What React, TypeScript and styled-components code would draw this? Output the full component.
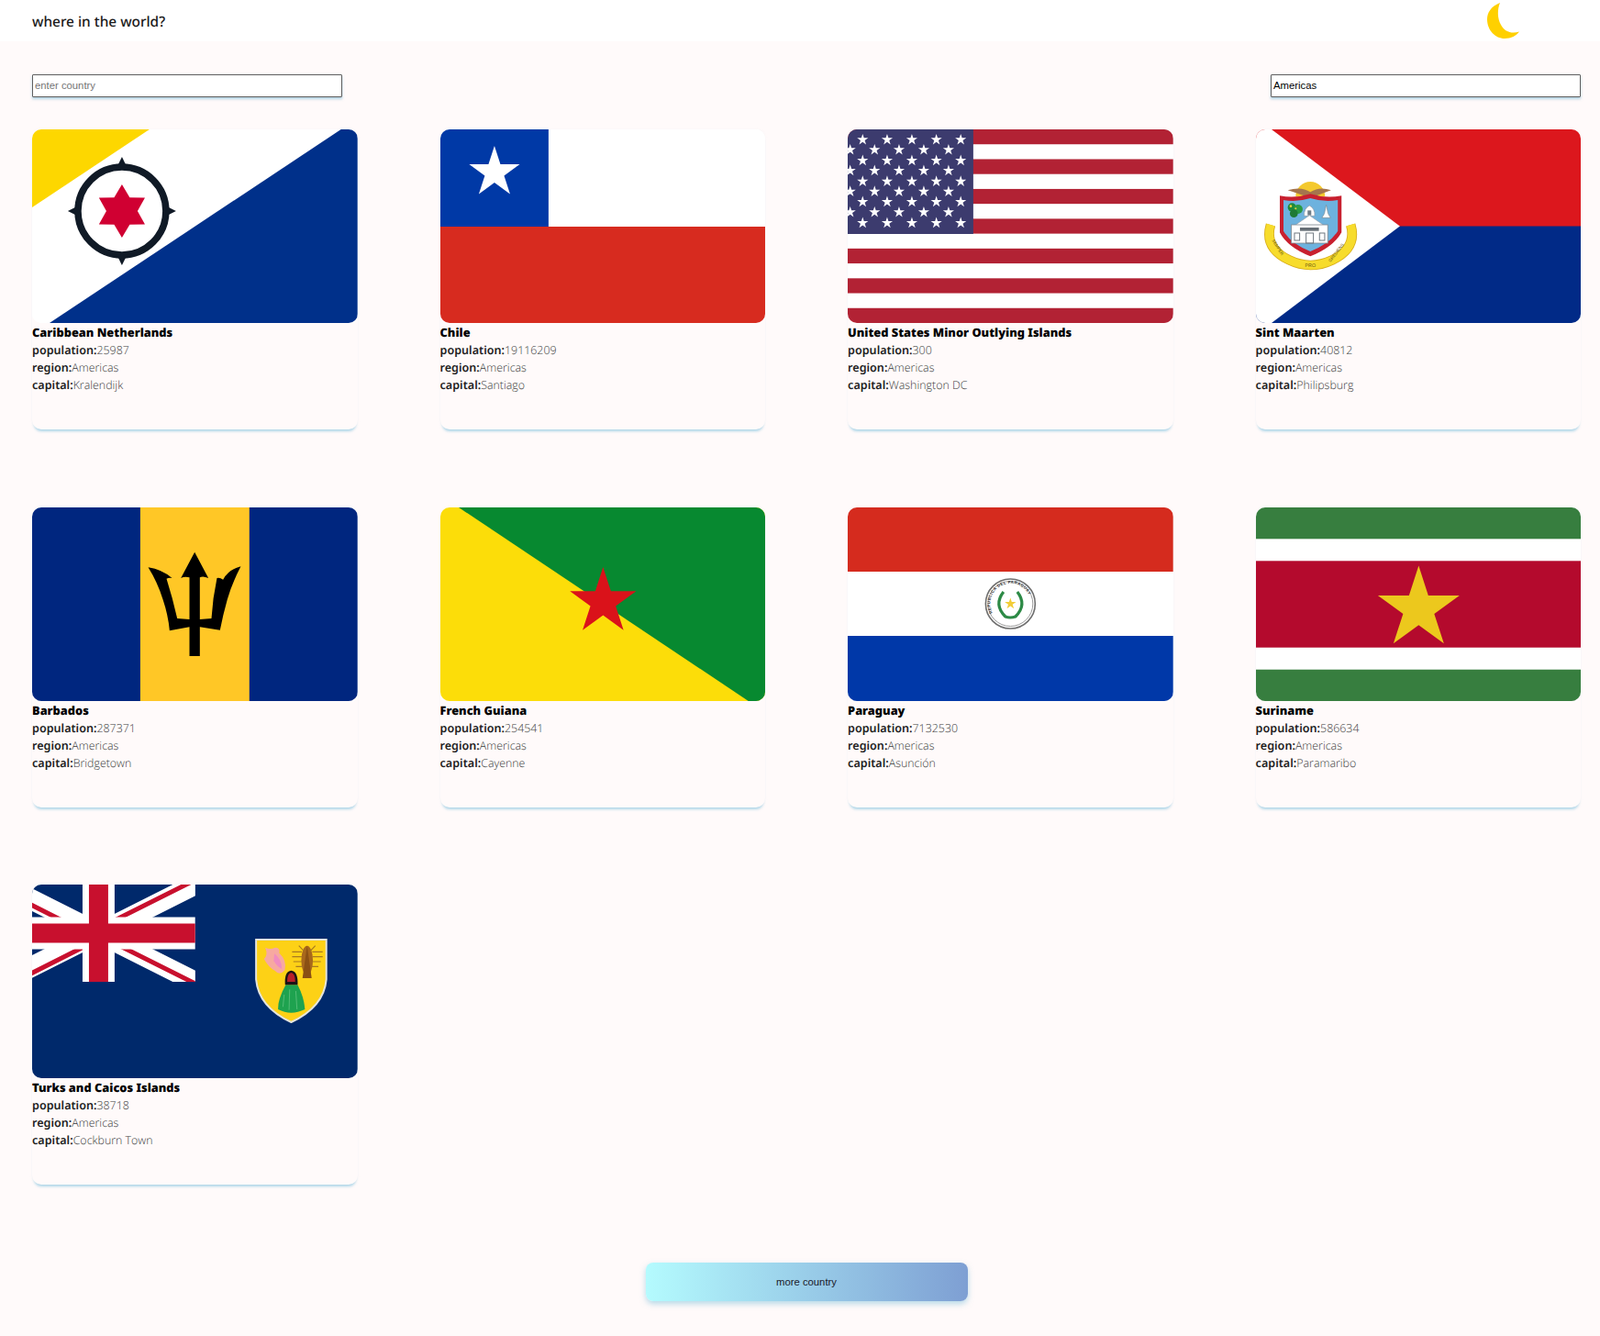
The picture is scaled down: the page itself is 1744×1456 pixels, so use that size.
import React from "react";
import styled, { createGlobalStyle } from "styled-components";

const GlobalStyle = createGlobalStyle`
  html, body { margin: 0; padding: 0; background: #fffafa; }
  body { font-family: "Open Sans", "Noto Sans", sans-serif; color: #111; text-rendering: geometricPrecision; }
  * { box-sizing: border-box; }
`;

const Page = styled.div`
  width: 1744px;
  height: 1456px;
  overflow: hidden;
  background: #fffafa;
`;
const Header = styled.header`
  height: 45px;
  background: #fff;
  display: flex;
  align-items: center;
  justify-content: space-between;
  padding: 0 87px 0 35px;
`;
const Title = styled.h1`
  margin: 3px 0 0;
  font: 500 15.4px/24px "Noto Sans", sans-serif;
  color: #1a1a1a;
`;
const Moon = styled.svg`
  display: block;
  width: 40px;
  height: 45px;
  margin-right: -1px;
`;
const Controls = styled.div`
  display: flex;
  justify-content: space-between;
  padding: 36px 21px 35px 35px;
`;
const Field = styled.input`
  width: 338px;
  height: 25px;
  padding: 0 2px 1px;
  background: #fff;
  border: 1px solid #5f5f5f;
  border-radius: 1px;
  box-shadow: 0 2px 3px rgba(110, 175, 205, 0.55);
  font: 11.3px "Liberation Sans", Arial, sans-serif;
  color: #000;
  outline: none;
  &::placeholder { color: #757575; opacity: 1; }
`;
const Grid = styled.main`
  display: grid;
  grid-template-columns: repeat(4, 354.7px);
  justify-content: space-between;
  row-gap: 84.5px;
  padding: 0 20.7px 0 35px;
`;
const Card = styled.article`
  height: 327px;
  border-radius: 10px;
  background: #fffafa;
  box-shadow: 0 4px 3px -2px rgba(120, 190, 220, 0.6), 0 0 3px rgba(215, 222, 228, 0.16);
`;
const FlagBox = styled.div`
  height: 211px;
  border-radius: 10px;
  overflow: hidden;
  background: #fff;
`;
const FlagSvg = styled.svg`
  display: block;
  width: 100%;
  height: 211px;
`;
const Info = styled.div`
  padding-top: 1px;
`;
const Name = styled.h2`
  margin: 0;
  font: 900 12.8px/19px "Noto Sans", sans-serif;
  color: #000;
`;
const Row = styled.p`
  margin: 0;
  font: 600 12.6px/19px "Noto Sans", sans-serif;
  color: #1f1f1f;
`;
const Value = styled.span`
  font: 300 12.4px/19px "Open Sans", sans-serif;
  color: #3a3a3a;
`;
const Footer = styled.footer`
  display: flex;
  justify-content: center;
  padding: 85px 0 0 14px;
`;
const MoreButton = styled.button`
  width: 351px;
  height: 42px;
  border: none;
  border-radius: 8px;
  background: linear-gradient(90deg, #b4fbfe 0%, #7e9fd3 100%);
  box-shadow: 0 3px 6px rgba(110, 185, 215, 0.5);
  font: 11.3px "Liberation Sans", Arial, sans-serif;
  color: #1a1a2a;
`;

const star = (cx: number, cy: number, R: number, r = R * 0.382, n = 5) => {
  const pts: string[] = [];
  for (let i = 0; i < n * 2; i++) {
    const a = -Math.PI / 2 + (i * Math.PI) / n;
    const rad = i % 2 ? r : R;
    pts.push(`${(cx + rad * Math.cos(a)).toFixed(2)},${(cy + rad * Math.sin(a)).toFixed(2)}`);
  }
  return pts.join(" ");
};

const Flag: React.FC<{ children: React.ReactNode }> = ({ children }) => (
  <FlagBox>
    <FlagSvg viewBox="0 0 355 211" preserveAspectRatio="none" aria-hidden="true">{children}</FlagSvg>
  </FlagBox>
);

const Bonaire = () => (
  <Flag>
    <rect width="355" height="211" fill="#fff" />
    <polygon points="0,0 128,0 0,85" fill="#fdd700" />
    <polygon points="337,0 355,0 355,211 19,211" fill="#00308a" />
    <circle cx="98" cy="89" r="48" fill="none" stroke="#101a26" strokeWidth="7.5" />
    <polygon points="98,30 105,44 91,44" fill="#101a26" />
    <polygon points="98,148 105,134 91,134" fill="#101a26" />
    <polygon points="39,89 53,82 53,96" fill="#101a26" />
    <polygon points="157,89 143,82 143,96" fill="#101a26" />
    <polygon points={star(98, 89, 29, 17, 6)} fill="#d00032" />
  </Flag>
);

const Chile = () => (
  <Flag>
    <rect width="355" height="106" fill="#fff" />
    <rect y="106" width="355" height="105" fill="#d72b1f" />
    <rect width="118" height="106" fill="#0039a6" />
    <polygon points={star(59, 47, 29)} fill="#fff" />
  </Flag>
);

const usaRows = [11.3, 22.3, 34, 45, 56.7, 67.7, 79, 90.3, 102];
const usaOdd = [16.3, 43, 70, 96.7, 123.3];
const usaEven = [2.7, 29.3, 56, 83, 110];
const USA = () => (
  <Flag>
    <rect width="355" height="211" fill="#fff" />
    {[0, 2, 4, 6, 8, 10, 12].map((i) => (
      <rect key={i} y={(i * 211) / 13} width="355" height={211 / 13} fill="#b22234" />
    ))}
    <rect width="137" height="114" fill="#3c3b6e" />
    {usaRows.map((y, r) =>
      (r % 2 ? usaEven : usaOdd).map((x) => <polygon key={`${r}-${x}`} points={star(x, y, 6.4)} fill="#fff" />)
    )}
  </Flag>
);

const SintMaarten = () => (
  <Flag>
    <rect width="355" height="106" fill="#dc171d" />
    <rect y="105.5" width="355" height="106" fill="#012a87" />
    <polygon points="0,0 17,0 157,105.5 17,211 0,211" fill="#fff" />
    <g transform="translate(6,49) scale(0.3333)">
      <path d="M112 72 A48 48 0 0 1 208 72Z" fill="#f4c92e" />
      <path d="M86 52 Q130 38 160 58 Q190 38 228 52 Q190 66 168 74 L152 74 Q130 66 86 52Z" fill="#a5754d" />
      <path d="M30 165 Q8 240 90 280 Q160 314 232 280 Q314 240 292 165" fill="none" stroke="#d8ae1c" strokeWidth="32" />
      <path d="M30 165 Q8 240 90 280 Q160 314 232 280 Q314 240 292 165" fill="none" stroke="#f7dc2c" strokeWidth="27" />
      <path d="M60 70 Q110 80 160 64 Q210 80 262 70 L262 190 Q235 238 160 268 Q85 238 60 190Z" fill="#c8202f" />
      <path d="M72 84 Q115 92 160 78 Q205 92 250 84 L250 185 Q225 226 160 252 Q95 226 72 185Z" fill="#6db2de" />
      <circle cx="100" cy="108" r="14" fill="#1f8a3b" />
      <circle cx="120" cy="114" r="15" fill="#2a9a44" />
      <circle cx="106" cy="128" r="13" fill="#1f7a34" />
      <circle cx="96" cy="104" r="4" fill="#ecd13a" />
      <circle cx="112" cy="112" r="3" fill="#ecd13a" />
      <path d="M157 102 Q176 112 174 136 L140 136 Q138 112 157 102Z" fill="#fff" stroke="#8f99a1" strokeWidth="2" />
      <rect x="151" y="118" width="12" height="16" fill="#6f7d87" />
      <path d="M108 168 L157 134 L206 168Z" fill="#fff" stroke="#99a2aa" strokeWidth="2" />
      <rect x="98" y="165" width="119" height="60" fill="#fff" stroke="#7f8991" strokeWidth="2.5" />
      <rect x="126" y="174" width="62" height="11" fill="#666e75" />
      <rect x="108" y="192" width="17" height="24" fill="none" stroke="#6f7880" strokeWidth="3" />
      <rect x="146" y="192" width="24" height="33" fill="none" stroke="#6f7880" strokeWidth="3" />
      <rect x="190" y="192" width="17" height="24" fill="none" stroke="#6f7880" strokeWidth="3" />
      <path d="M212 100 L218 128 L226 142 L198 142 L206 128Z" fill="#fff" stroke="#7f8991" strokeWidth="2" />
      <text x="160" y="304" fontSize="16" textAnchor="middle" fill="#6b5a12" fontFamily="Liberation Sans">PRO</text>
      <text transform="translate(34,216) rotate(58)" fontSize="14" fill="#6b5a12" fontFamily="Liberation Sans">SEMPER</text>
      <text transform="translate(226,288) rotate(-52)" fontSize="14" fill="#6b5a12" fontFamily="Liberation Sans">GREDIENS</text>
    </g>
  </Flag>
);

const Barbados = () => (
  <Flag>
    <rect width="355" height="211" fill="#00267f" />
    <rect x="118" width="119" height="211" fill="#ffc726" />
    <g transform="translate(65,27) scale(0.3333)">
      <path
        d="M337 65 L382 150 Q364 142 354 148 L354 285 L392 282 Q396 215 410 150 Q420 148 430 155 Q448 122 488 112 Q458 170 444 220 Q430 270 420 320 L354 310 L354 405 L320 405 L320 310 L255 322 Q250 270 233 220 Q216 165 185 115 Q230 122 263 150 Q252 148 245 152 Q265 215 280 282 L320 285 L320 148 Q305 143 292 150Z"
        fill="#000"
      />
    </g>
  </Flag>
);

const FrenchGuiana = () => (
  <Flag>
    <rect width="355" height="211" fill="#fcdd09" />
    <polygon points="20,0 355,0 355,211 336,211" fill="#078930" />
    <polygon points={star(177.5, 103, 38)} fill="#da121a" />
  </Flag>
);

const Paraguay = () => (
  <Flag>
    <rect width="355" height="70" fill="#d52b1e" />
    <rect y="70" width="355" height="70" fill="#fff" />
    <rect y="140" width="355" height="71" fill="#0038a8" />
    <circle cx="177.5" cy="105" r="27" fill="#fff" stroke="#6f6f6f" strokeWidth="1.6" />
    <circle cx="177.5" cy="105" r="24.5" fill="none" stroke="#9a9a9a" strokeWidth="1" />
    <defs>
      <path id="py-ring" d="M158 115 A22 22 0 1 1 197 115" />
    </defs>
    <text fontSize="4.4" fontWeight="700" fill="#333" fontFamily="Liberation Sans" letterSpacing="0.4">
      <textPath href="#py-ring">REPUBLICA DEL PARAGUAY</textPath>
    </text>
    <path d="M170 92 Q159 106 172 119 Q177 121 183 119 Q196 106 185 92" fill="none" stroke="#2d8a46" strokeWidth="3.2" />
    <polygon points={star(177.5, 105, 6.5)} fill="#f2cd37" />
  </Flag>
);

const Suriname = () => (
  <Flag>
    <rect width="355" height="211" fill="#377e3f" />
    <rect y="34.3" width="355" height="142.4" fill="#fff" />
    <rect y="58.3" width="355" height="94.4" fill="#b40a2d" />
    <polygon points={star(177.5, 110.4, 46.8)} fill="#ecc81d" />
  </Flag>
);

const Turks = () => (
  <Flag>
    <rect width="355" height="211" fill="#00296b" />
    <defs>
      <clipPath id="tc-jack"><rect width="178" height="106" /></clipPath>
    </defs>
    <g clipPath="url(#tc-jack)">
      <g transform="translate(-33,0)">
        <path d="M0 0 L211 106 M211 0 L0 106" stroke="#fff" strokeWidth="22" />
        <path
          d="M0 6 L105 59 M105 48 L211 -5 M105 55 L211 108 M0 113 L105 60"
          stroke="#c8102e"
          strokeWidth="5"
        />
        <path d="M105.5 0 V106 M0 53 H211" stroke="#fff" strokeWidth="35" />
        <path d="M105.5 0 V106 M0 53 H211" stroke="#c8102e" strokeWidth="21" />
      </g>
    </g>
    <g transform="translate(225,46) scale(0.3333)">
      <path d="M58 42 H288 V172 Q280 262 173 312 Q66 262 58 172Z" fill="#fdd116" stroke="#e4e4dc" strokeWidth="6" />
      <path d="M88 68 Q105 76 120 68 Q138 68 134 86 Q160 110 152 142 Q136 162 120 144 Q98 132 84 105 Q98 92 88 68Z" fill="#f7a9a0" />
      <path d="M118 88 Q142 105 142 138 Q128 132 116 112Z" fill="#f08cc0" />
      <ellipse cx="225" cy="110" rx="19" ry="48" fill="#a8681c" />
      <path d="M225 62 L210 168 H240Z" fill="#8a5014" />
      <path d="M176 82 H208 M176 98 H208 M180 114 H208 M188 130 H210 M242 82 H276 M242 98 H276 M242 114 H270 M240 130 H262 M198 62 L215 80 M252 62 L235 80" stroke="#a87a20" strokeWidth="3.5" fill="none" />
      <path d="M155 190 Q128 240 130 270 Q172 292 218 270 Q215 230 194 190Z" fill="#1ea24f" />
      <path d="M150 222 L146 262 M168 205 L166 272 M188 210 L192 270" stroke="#6cc88a" strokeWidth="2" fill="none" />
      <path d="M153 190 Q150 145 173 143 Q196 145 194 190Z" fill="#1c1416" />
      <path d="M160 180 Q160 152 173 150 Q186 152 186 180Z" fill="#b8202a" />
    </g>
  </Flag>
);

const countries = [
  { name: "Caribbean Netherlands", population: 25987, capital: "Kralendijk", Flag: Bonaire },
  { name: "Chile", population: 19116209, capital: "Santiago", Flag: Chile },
  { name: "United States Minor Outlying Islands", population: 300, capital: "Washington DC", Flag: USA },
  { name: "Sint Maarten", population: 40812, capital: "Philipsburg", Flag: SintMaarten },
  { name: "Barbados", population: 287371, capital: "Bridgetown", Flag: Barbados },
  { name: "French Guiana", population: 254541, capital: "Cayenne", Flag: FrenchGuiana },
  { name: "Paraguay", population: 7132530, capital: "Asunción", Flag: Paraguay },
  { name: "Suriname", population: 586634, capital: "Paramaribo", Flag: Suriname },
  { name: "Turks and Caicos Islands", population: 38718, capital: "Cockburn Town", Flag: Turks },
];

export default function App() {
  return (
    <Page>
      <GlobalStyle />
      <Header>
        <Title>where in the world?</Title>
        <Moon viewBox="0 0 40 45" aria-hidden="true">
          <path
            d="M17 3 C7 7 3 14 3 21 C3 33 12 42 22 42 C29 42 35 39 38 34.5 C30 37 22 35 18 27 C14 20 14 10 17 3Z"
            fill="#ffd000"
          />
        </Moon>
      </Header>
      <Controls>
        <Field placeholder="enter country" />
        <Field defaultValue="Americas" />
      </Controls>
      <Grid>
        {countries.map((c) => (
          <Card key={c.name}>
            <c.Flag />
            <Info>
              <Name>{c.name}</Name>
              <Row>population:<Value>{c.population}</Value></Row>
              <Row>region:<Value>Americas</Value></Row>
              <Row>capital:<Value>{c.capital}</Value></Row>
            </Info>
          </Card>
        ))}
      </Grid>
      <Footer>
        <MoreButton>more country</MoreButton>
      </Footer>
    </Page>
  );
}
